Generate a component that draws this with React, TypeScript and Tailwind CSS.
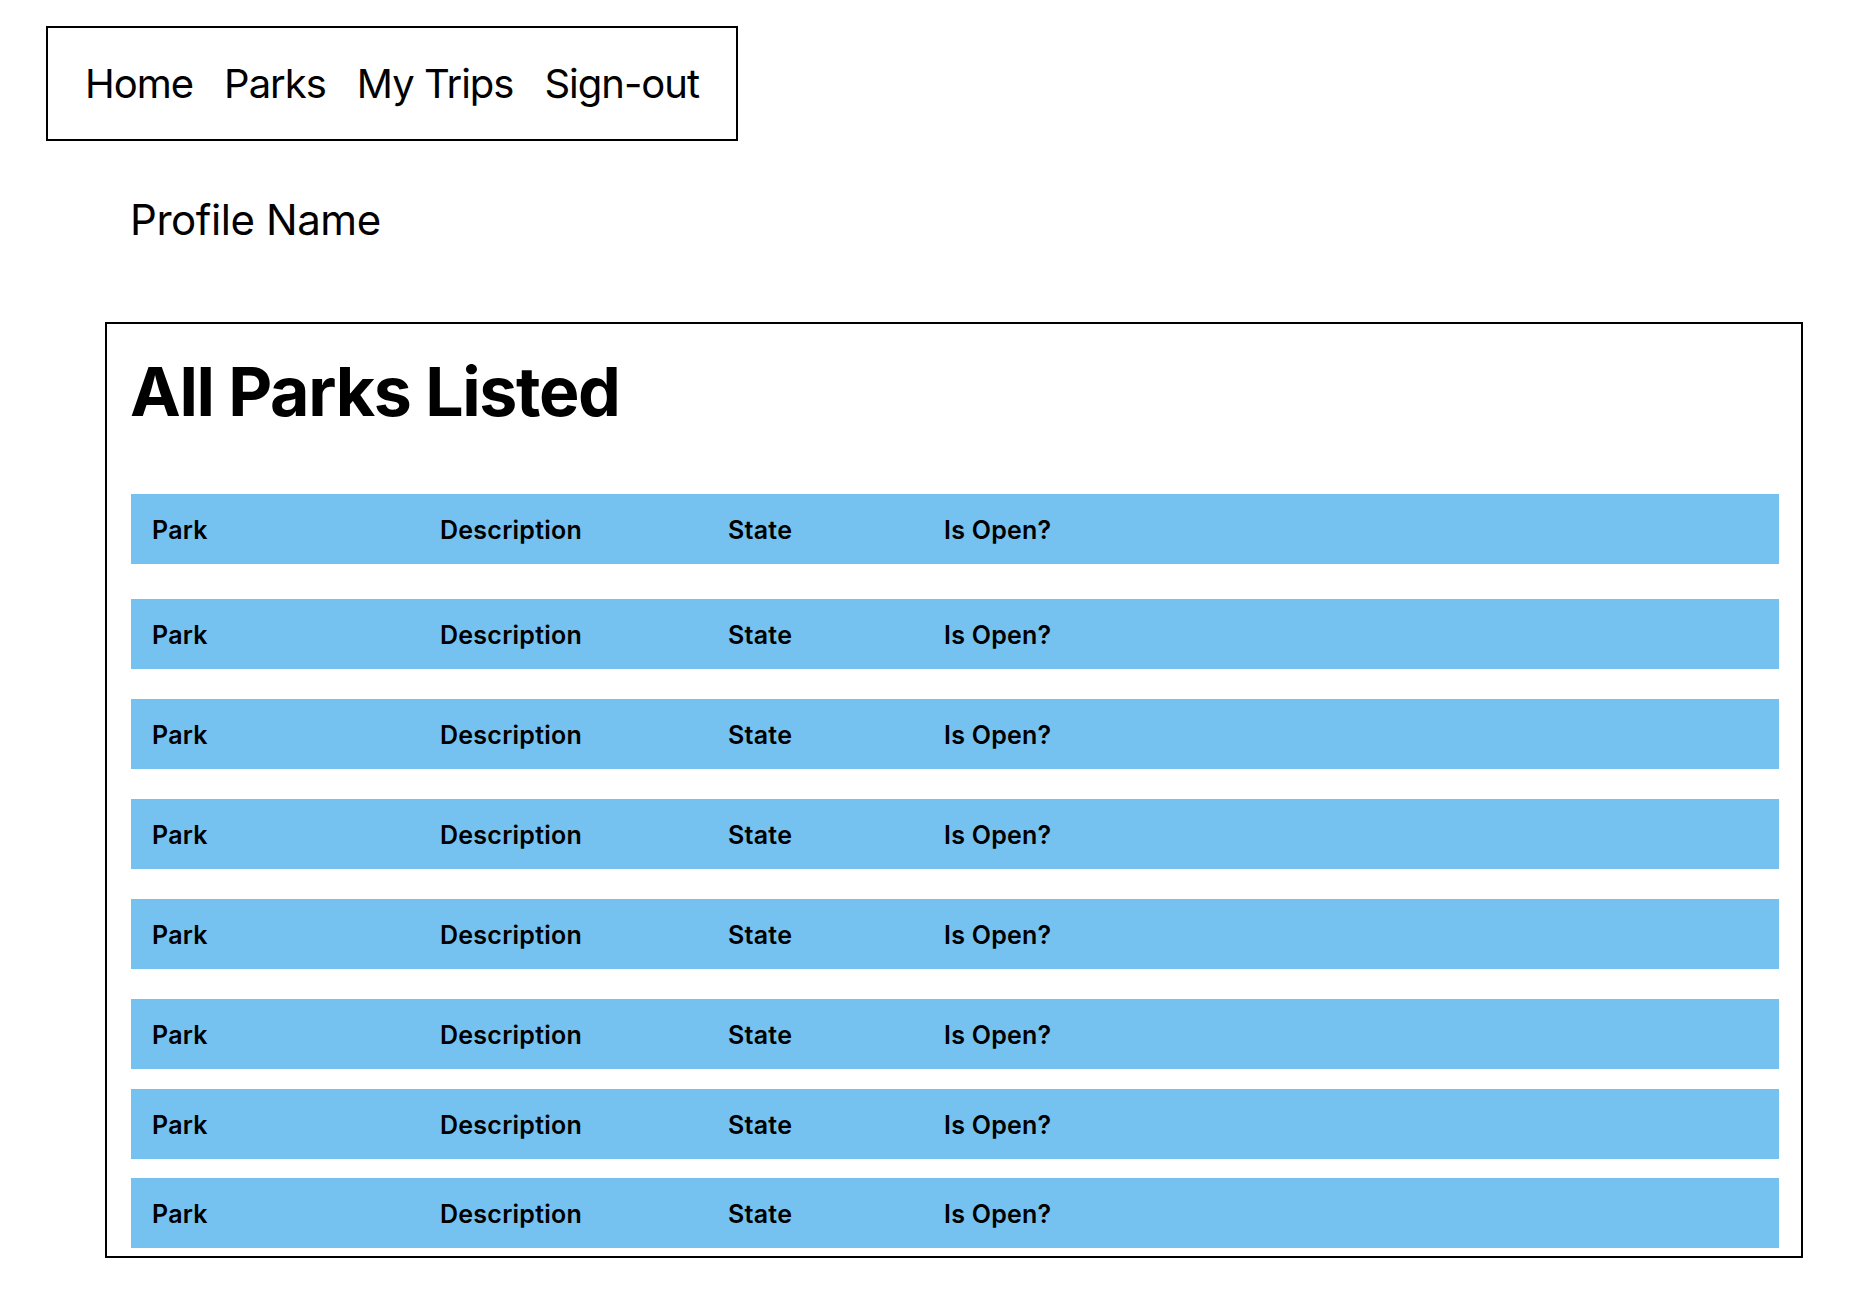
const navLinks = ['Home', 'Parks', 'My Trips', 'Sign-out'];

// row top margins follow the reference spacing
const rows = [
  { id: 1, mt: 'mt-[69px]' },
  { id: 2, mt: 'mt-[35px]' },
  { id: 3, mt: 'mt-[30px]' },
  { id: 4, mt: 'mt-[30px]' },
  { id: 5, mt: 'mt-[30px]' },
  { id: 6, mt: 'mt-[30px]' },
  { id: 7, mt: 'mt-[20px]' },
  { id: 8, mt: 'mt-[19px]' },
];

function ParkRow({ mt }: { mt: string }) {
  return (
    <div className={`${mt} flex items-center h-[70px] bg-[#75c2f0] pl-[21px] pt-[2px] text-[25px] leading-none font-semibold tracking-[0.01em] text-black`}>
      <div className="w-[288px]">Park</div>
      <div className="w-[288px]">Description</div>
      <div className="w-[216px]">State</div>
      <div>Is Open?</div>
    </div>
  );
}

export default function App() {
  return (
    <div className="min-h-[1296px] bg-white font-['Inter',sans-serif] text-black pt-[26px]">
      <nav className="ml-[46px] inline-flex items-center h-[115px] border-2 border-black px-[37px] gap-[31px] text-[40px] leading-none tracking-[-0.025em]">
        {navLinks.map((link) => (
          <a key={link} href="#">{link}</a>
        ))}
      </nav>

      <div className="ml-[130px] mt-[58px] text-[42px] leading-none tracking-[-0.01em]">Profile Name</div>

      <div className="ml-[105px] mt-[81px] w-[1698px] border-2 border-black pt-[33px] pb-[8px] pl-[24px] pr-[22px]">
        <h1 className="-ml-[1px] text-[68px] leading-none font-bold tracking-[-0.02em]">All Parks Listed</h1>
        {rows.map((row) => (
          <ParkRow key={row.id} mt={row.mt} />
        ))}
      </div>
    </div>
  );
}
